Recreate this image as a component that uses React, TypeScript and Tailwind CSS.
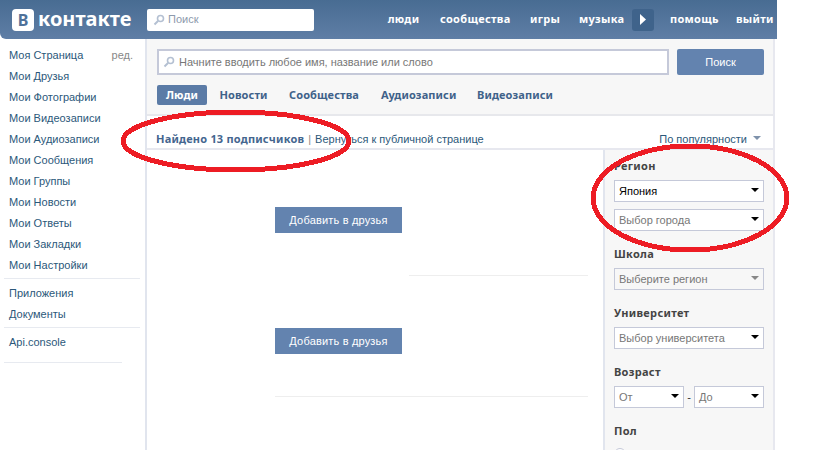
import { ReactNode } from "react";

const menuTop = ["Мои Друзья", "Мои Фотографии", "Мои Видеозаписи", "Мои Аудиозаписи", "Мои Сообщения", "Мои Группы", "Мои Новости", "Мои Ответы", "Мои Закладки", "Мои Настройки"];
const topLinks = [
	{ label: "люди", w: "w-[33px] mr-[20px]" },
	{ label: "сообщества", w: "w-[70px] mr-[20px]" },
	{ label: "игры", w: "w-[29px] mr-[20px]" },
	{ label: "музыка", w: "w-[45px] mr-[8px]" },
];

const SearchIcon = () => (
	<svg width="12" height="12" viewBox="0 0 12 12" fill="none" className="shrink-0">
		<circle cx="7.5" cy="4.5" r="3" stroke="#b4c0d2" strokeWidth="1.6" />
		<path d="M5 7 L1.5 10.5" stroke="#b4c0d2" strokeWidth="2" />
	</svg>
);

const Arrow = ({ color = "#000" }: { color?: string }) => (
	<svg width="8" height="4" viewBox="0 0 8 4" className="shrink-0 mb-[2px]">
		<path d="M0 0 H8 L4 4 Z" fill={color} />
	</svg>
);

const Select = ({ text, dark, disabled, className = "" }: { text: string; dark?: boolean; disabled?: boolean; className?: string }) => (
	<div className={`h-[22px] flex items-center justify-between pl-[4px] pr-[4px] border border-[#c5c9d9] ${disabled ? "bg-[#f7f7f7]" : "bg-white"} ${dark ? "text-black" : "text-[#777]"} ${className}`}>
		<span className="pt-[1px]">{text}</span>
		<Arrow color={disabled ? "#888" : "#000"} />
	</div>
);

const FilterTitle = ({ children, className = "" }: { children: ReactNode; className?: string }) => (
	<div className={`font-bold font-['Noto_Sans',sans-serif] tracking-[0.3px] text-[#444] leading-[14px] ${className}`}>{children}</div>
);

const Divider = ({ className = "" }: { className?: string }) => <div className={`h-px bg-[#e7eaf0] ${className}`} />;

const AddButton = ({ className = "" }: { className?: string }) => (
	<div className={`w-[127px] h-[26px] ml-[128px] flex items-center justify-center bg-[#6383af] text-white tracking-[0.18px] ${className}`}>Добавить в друзья</div>
);

export default function App() {
	return (
		<div className="relative w-[820px] h-[458px] bg-white overflow-hidden text-[11px] font-['Liberation_Sans',sans-serif]">
			<div className="w-[777px] h-[450px] overflow-hidden flex flex-col">
				{/* header */}
				<header className="h-[39px] shrink-0 flex items-center pl-[12px] rounded-bl-[6px] bg-gradient-to-b from-[#486c92] to-[#5f7ea6] text-white">
					<div className="w-[22px] h-[22px] rounded-[4px] bg-white flex items-center justify-center text-[#4f7199] font-bold font-['Noto_Sans',sans-serif] text-[16px] leading-none">В</div>
					<div className="ml-[4px] w-[109px] font-bold font-['Noto_Sans',sans-serif] text-[20px] leading-none pb-[2px]">контакте</div>
					<div className="w-[167px] h-[22px] bg-white rounded-[2px] flex items-center pl-[6px] gap-[3px] text-[#8d9aac]">
						<SearchIcon />
						<span>Поиск</span>
					</div>
					<nav className="ml-[73px] flex items-center font-bold font-['Noto_Sans',sans-serif] tracking-[0.3px]">
						{topLinks.map((l) => (
							<span key={l.label} className={`${l.w} text-center whitespace-nowrap`}>{l.label}</span>
						))}
						<div className="w-[22px] h-[22px] mr-[16px] rounded-[3px] bg-[#3f638b] flex items-center justify-center">
							<svg width="8" height="11" viewBox="0 0 8 11"><path d="M1 0 L7 5.5 L1 11 Z" fill="#fff" /></svg>
						</div>
						<span className="w-[46px] mr-[20px] text-center">помощь</span>
						<span className="w-[36px] text-center">выйти</span>
					</nav>
				</header>

				<div className="flex flex-1 min-h-0">
					{/* left menu */}
					<aside className="w-[147px] shrink-0 border-r-2 border-[#e1e5ee] text-[#2b587a]">
						<div className="pl-[9px] pr-[12px] pt-[6px]">
							<div className="h-[21px] flex items-center justify-between">
								<span>Моя Страница</span>
								<span className="text-[#888]">ред.</span>
							</div>
							{menuTop.map((m) => (
								<div key={m} className="h-[21px] flex items-center">{m}</div>
							))}
						</div>
						<Divider className="ml-[4px] w-[136px] mt-[2px]" />
						<div className="pl-[9px] pt-[4px]">
							<div className="h-[21px] flex items-center">Приложения</div>
							<div className="h-[21px] flex items-center">Документы</div>
						</div>
						<Divider className="ml-[4px] w-[136px] mt-[2px]" />
						<div className="pl-[9px] pt-[2px] h-[26px] flex items-center">Api.console</div>
						<Divider className="ml-[4px] w-[118px] mt-[8px] bg-[#dfe6f0]" />
					</aside>

					{/* content */}
					<main className="flex-1 min-w-0 mr-[2px] border-r-2 border-[#e7e8ef] flex flex-col">
						<div className="h-[77px] shrink-0 bg-[#f7f7f7] border-b-2 border-[#e7e8ec] pt-[10px] pl-[10px]">
							<div className="flex gap-[8px]">
								<div className="w-[512px] h-[26px] shrink-0 bg-white border-2 border-[#c5c9d9] flex items-center pl-[4px] gap-[4px] text-[#777]">
									<SearchIcon />
									<span>Начните вводить любое имя, название или слово</span>
								</div>
								<div className="w-[87px] h-[26px] shrink-0 rounded-[2px] bg-[#6383af] text-white flex items-center justify-center">Поиск</div>
							</div>
							<div className="mt-[10px] flex items-center font-bold font-['Noto_Sans',sans-serif] tracking-[0.1px] text-[#3f628a] h-[20px]">
								<span className="w-[50px] h-[20px] rounded-[2px] bg-[#5b7ba6] text-white flex items-center justify-center mr-[12px]">Люди</span>
								<span className="w-[49px] mr-[20px] text-center whitespace-nowrap">Новости</span>
								<span className="w-[72px] mr-[21px] text-center whitespace-nowrap">Сообщества</span>
								<span className="w-[75px] mr-[21px] text-center whitespace-nowrap">Аудиозаписи</span>
								<span className="w-[74px] text-center whitespace-nowrap">Видеозаписи</span>
							</div>
						</div>
						<div className="h-[34px] shrink-0 border-b-2 border-[#e7e8ef] flex items-end justify-between pb-[1px] pl-[9px] pr-[12px] text-[#2b587a]">
							<div className="flex items-center">
								<span className="font-bold font-['Noto_Sans',sans-serif] tracking-[0.2px] text-[#44668f]">Найдено 13 подписчиков</span>
								<span className="mx-[4px] text-[#888]">|</span>
								<span>Вернуться к публичной странице</span>
							</div>
							<div className="flex items-center gap-[6px]">
								<span>По популярности</span>
								<Arrow color="#7f92ab" />
							</div>
						</div>
						<div className="flex flex-1 min-h-0">
							<div className="w-[456px] shrink-0 pt-[57px]">
								<AddButton />
								<Divider className="ml-[262px] w-[179px] mt-[42px] bg-[#eeeeee]" />
								<AddButton className="mt-[52px]" />
								<Divider className="ml-[128px] w-[313px] mt-[42px] bg-[#eeeeee]" />
							</div>
							<aside className="flex-1 border-l-2 border-[#e1e5ee] bg-[#f7f7f7] pl-[9px] pr-[9px] pt-[9px]">
								<FilterTitle>Регион</FilterTitle>
								<Select text="Япония" dark className="mt-[7px]" />
								<Select text="Выбор города" className="mt-[7px]" />
								<FilterTitle className="mt-[16px]">Школа</FilterTitle>
								<Select text="Выберите регион" disabled className="mt-[7px]" />
								<FilterTitle className="mt-[16px]">Университет</FilterTitle>
								<Select text="Выбор университета" className="mt-[7px]" />
								<FilterTitle className="mt-[16px]">Возраст</FilterTitle>
								<div className="mt-[7px] flex items-center justify-between">
									<Select text="От" className="w-[70px]" />
									<span className="text-[#333]">-</span>
									<Select text="До" className="w-[70px]" />
								</div>
								<FilterTitle className="mt-[16px]">Пол</FilterTitle>
								<div className="mt-[8px] flex items-center gap-[6px] text-[#333]">
									<span className="w-[12px] h-[12px] rounded-full border border-[#c5c9d9] bg-white" />
									<span>Мужской</span>
								</div>
							</aside>
						</div>
					</main>
				</div>
			</div>

			{/* red marker circles over the page */}
			<svg className="absolute left-0 top-0 pointer-events-none" width="820" height="458" viewBox="0 0 820 458" fill="none" shapeRendering="crispEdges">
				<ellipse cx="236" cy="141" rx="113" ry="29" stroke="#ed1c24" strokeWidth="5" />
				<ellipse cx="690" cy="198" rx="97" ry="52" stroke="#ed1c24" strokeWidth="5" />
			</svg>
		</div>
	);
}
